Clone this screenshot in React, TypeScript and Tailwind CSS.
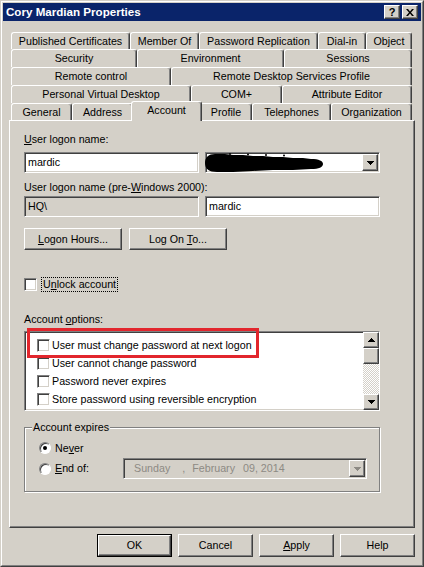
import type { ReactNode } from "react";

// classic win2k bevels
const raised =
  "border border-t-white border-l-white border-r-[#404040] border-b-[#404040] shadow-[inset_-1px_-1px_0_#808080] bg-[#d4d0c8]";
const sunken =
  "border border-t-[#808080] border-l-[#808080] border-r-white border-b-white shadow-[inset_1px_1px_0_#404040,inset_-1px_-1px_0_#d4d0c8]";

type TabDef = { label: string; w: string };

const backRows: { h: string; tabs: TabDef[] }[] = [
  {
    h: "h-[17px]",
    tabs: [
      { label: "Published Certificates", w: "w-[119px]" },
      { label: "Member Of", w: "w-[69px]" },
      { label: "Password Replication", w: "w-[119px]" },
      { label: "Dial-in", w: "w-[48px]" },
      { label: "Object", w: "w-[46px]" },
    ],
  },
  {
    h: "h-[18px]",
    tabs: [
      { label: "Security", w: "w-[126px]" },
      { label: "Environment", w: "w-[147px]" },
      { label: "Sessions", w: "w-[128px]" },
    ],
  },
  {
    h: "h-[18px]",
    tabs: [
      { label: "Remote control", w: "w-[160px]" },
      { label: "Remote Desktop Services Profile", w: "w-[241px]" },
    ],
  },
  {
    h: "h-[18px]",
    tabs: [
      { label: "Personal Virtual Desktop", w: "w-[180px]" },
      { label: "COM+", w: "w-[91px]" },
      { label: "Attribute Editor", w: "w-[130px]" },
    ],
  },
];

const accountOptions = [
  "User must change password at next logon",
  "User cannot change password",
  "Password never expires",
  "Store password using reversible encryption",
];

function Tab({ label, w }: TabDef) {
  return (
    <div
      className={`${w} flex items-center justify-center whitespace-nowrap border-t border-l border-r border-t-white border-l-white border-r-[#404040] rounded-t-[3px] shadow-[inset_-1px_0_0_#808080]`}
    >
      {label}
    </div>
  );
}

function ArrowDown({ color = "#000" }: { color?: string }) {
  return (
    <svg width="7" height="4" viewBox="0 0 7 4" fill={color}>
      <path d="M0 0h7v1h-1v1h-1v1h-1v1h-1v-1h-1v-1h-1v-1h-1z" />
    </svg>
  );
}

function ArrowUp() {
  return (
    <svg width="7" height="4" viewBox="0 0 7 4" fill="#000">
      <path d="M3 0h1v1h1v1h1v1h1v1h-7v-1h1v-1h1v-1h1z" />
    </svg>
  );
}

function Checkbox() {
  return <div className={`w-[13px] h-[13px] shrink-0 bg-white ${sunken}`} />;
}

function Radio({ checked }: { checked?: boolean }) {
  return (
    <div className="w-[12px] h-[12px] shrink-0 rounded-full bg-white border border-t-[#808080] border-l-[#808080] border-r-white border-b-white shadow-[inset_1px_1px_0_#404040] flex items-center justify-center">
      {checked && <div className="w-[4px] h-[4px] rounded-full bg-black" />}
    </div>
  );
}

function Button({ w, children }: { w: string; children: ReactNode }) {
  return (
    <div className={`${w} h-full flex items-center justify-center ${raised}`}>
      {children}
    </div>
  );
}

function TitleBar() {
  return (
    <div className="h-[18px] bg-[#0a246a] flex items-center pl-[3px] pr-[3px]">
      <span className="text-white font-bold text-[11.6px] leading-[14px]">
        Cory Mardian Properties
      </span>
      <div className="ml-auto flex gap-[2px]">
        <div className={`w-[16px] h-[14px] flex items-center justify-center ${raised}`}>
          <span className="font-bold text-[11px] leading-[11px]">?</span>
        </div>
        <div className={`w-[16px] h-[14px] flex items-center justify-center ${raised}`}>
          <svg width="8" height="7" viewBox="0 0 8 7" fill="#000">
            <path d="M0 0h2l2 2.4 2-2.4h2l-3 3.5 3 3.5h-2l-2-2.4-2 2.4h-2l3-3.5z" />
          </svg>
        </div>
      </div>
    </div>
  );
}

function Tabs() {
  return (
    <div className="ml-[2px] mr-[3px] flex flex-col">
      {backRows.map((row, i) => (
        <div key={i} className={`flex ${row.h}`}>
          {row.tabs.map((t) => (
            <Tab key={t.label} {...t} />
          ))}
        </div>
      ))}
      <div className="flex h-[17px]">
        <Tab label="General" w="w-[61px]" />
        <Tab label="Address" w="w-[61px]" />
        <div className="relative z-10 -mx-[2px] -mt-[2px] h-[20px] w-[71px] shrink-0 bg-[#d4d0c8] flex justify-center pt-[2px] border-t border-l border-r border-t-white border-l-white border-r-[#404040] rounded-t-[3px] shadow-[inset_-1px_0_0_#808080]">
          Account
        </div>
        <Tab label="Profile" w="w-[52px]" />
        <Tab label="Telephones" w="w-[79px]" />
        <Tab label="Organization" w="w-[81px]" />
      </div>
    </div>
  );
}

function Panel() {
  return (
    <div className="h-[408px] border border-t-white border-l-white border-r-[#404040] border-b-[#404040] shadow-[inset_-1px_-1px_0_#808080] pl-[14px] flex flex-col">
      <div className="mt-[12px] h-[13px]">
        <u>U</u>ser logon name:
      </div>
      <div className="mt-[6px] flex gap-[6px]">
        <div className={`w-[175px] h-[21px] bg-white ${sunken} flex items-center pl-[3px]`}>
          mardic
        </div>
        <div className={`relative w-[175px] h-[21px] bg-white ${sunken} flex items-center justify-end pr-[1px]`}>
          <svg
            className="absolute -left-[3px] top-0"
            width="120"
            height="20"
            viewBox="0 0 120 20"
            fill="#000"
          >
            <path d="M2 10C2 4 6 1 12 1L22 1 30 2 40 2 50 3 60 3 70 4 80 4 90 5 100 5 108 6C116 6 120 8 120 11 120 14 116 16 108 16L90 17 70 17 50 18 30 19 14 19C6 19 2 16 2 10Z" />
            <circle cx="27" cy="1" r="1" />
            <circle cx="45" cy="1.5" r="1" />
            <circle cx="63" cy="2" r="1" />
            <circle cx="81" cy="2.5" r="1" />
          </svg>
          <div className={`w-[16px] h-[17px] flex items-center justify-center ${raised}`}>
            <ArrowDown />
          </div>
        </div>
      </div>
      <div className="mt-[8px] h-[13px]">
        User logon name (pre-<u>W</u>indows 2000):
      </div>
      <div className="mt-[2px] flex gap-[6px]">
        <div className={`w-[175px] h-[21px] bg-[#d4d0c8] ${sunken} flex items-center pl-[3px]`}>
          HQ\
        </div>
        <div className={`w-[175px] h-[21px] bg-white ${sunken} flex items-center pl-[3px]`}>
          mardic
        </div>
      </div>
      <div className="mt-[11px] h-[22px] flex gap-[7px]">
        <Button w="w-[98px]">
          <span>
            <u>L</u>ogon Hours...
          </span>
        </Button>
        <Button w="w-[98px]">
          <span>
            Log On <u>T</u>o...
          </span>
        </Button>
      </div>
      <div className="mt-[27px] h-[15px] flex items-center">
        <Checkbox />
        <span className="ml-[4px] h-[15px] flex items-center px-[1px] border border-dotted border-black">
          U<u>n</u>lock account
        </span>
      </div>
      <div className="mt-[21px] h-[13px]">
        Account <u>o</u>ptions:
      </div>
      <div className={`relative mt-[5px] w-[356px] h-[80px] bg-white ${sunken} flex`}>
        <div className="flex-1 flex flex-col pt-[4px] pl-[12px]">
          {accountOptions.map((opt) => (
            <div key={opt} className="h-[18px] flex items-center gap-[2px]">
              <Checkbox />
              <span>{opt}</span>
            </div>
          ))}
        </div>
        <div className="w-[16px] flex flex-col">
          <div className={`h-[16px] flex items-center justify-center ${raised}`}>
            <ArrowUp />
          </div>
          <div className={`h-[16px] ${raised}`} />
          <div className="flex-1 bg-[repeating-conic-gradient(#ffffff_0%_25%,#d4d0c8_0%_50%)] bg-[length:2px_2px]" />
          <div className={`h-[16px] flex items-center justify-center ${raised}`}>
            <ArrowDown />
          </div>
        </div>
        <div className="absolute left-[2px] -top-[4px] w-[232px] h-[30px] border-[3px] border-[#e2262d]" />
      </div>
      <div className="relative mt-[16px] w-[356px] h-[65px] border border-[#808080] shadow-[inset_1px_1px_0_#ffffff,1px_1px_0_#ffffff] pl-[14px] pt-[10px] flex flex-col">
        <span className="absolute -top-[7px] left-[7px] px-[1px] bg-[#d4d0c8]">
          Account expires
        </span>
        <div className="h-[20px] flex items-center">
          <Radio checked />
          <span className="ml-[4px]">
            Ne<u>v</u>er
          </span>
        </div>
        <div className="h-[21px] flex items-center">
          <Radio />
          <span className="ml-[4px] w-[68px]">
            <u>E</u>nd of:
          </span>
          <div className={`w-[244px] h-[21px] bg-[#d4d0c8] ${sunken} p-[1px] flex items-center text-[#8d8a84]`}>
            <div className="flex-1 flex pl-[9px] whitespace-nowrap">
              <span>Sunday</span>
              <span className="ml-[12px]">,</span>
              <span className="ml-[7px]">February</span>
              <span className="ml-[8px]">09, 2014</span>
            </div>
            <div className={`w-[16px] h-[17px] flex items-center justify-center ${raised}`}>
              <ArrowDown color="#8d8a84" />
            </div>
          </div>
        </div>
      </div>
    </div>
  );
}

function Footer() {
  return (
    <div className="mt-[6px] h-[23px] flex justify-end gap-[6px]">
      <div className="w-[75px] h-full border border-black">
        <Button w="w-full">OK</Button>
      </div>
      <Button w="w-[75px]">Cancel</Button>
      <Button w="w-[75px]">
        <span>
          <u>A</u>pply
        </span>
      </Button>
      <Button w="w-[75px]">Help</Button>
    </div>
  );
}

export default function App() {
  return (
    <div className="w-[424px] h-[567px] bg-[#d4d0c8] border border-t-[#d4d0c8] border-l-[#d4d0c8] border-r-[#404040] border-b-[#404040] font-['Liberation_Sans',Arial,sans-serif] text-[10.7px] leading-[13px] text-black">
      <div className="h-full border border-t-white border-l-white border-r-[#808080] border-b-[#808080] p-px flex flex-col">
        <TitleBar />
        <div className="px-[6px] pt-[11px] flex flex-col">
          <Tabs />
          <Panel />
          <Footer />
        </div>
      </div>
    </div>
  );
}
